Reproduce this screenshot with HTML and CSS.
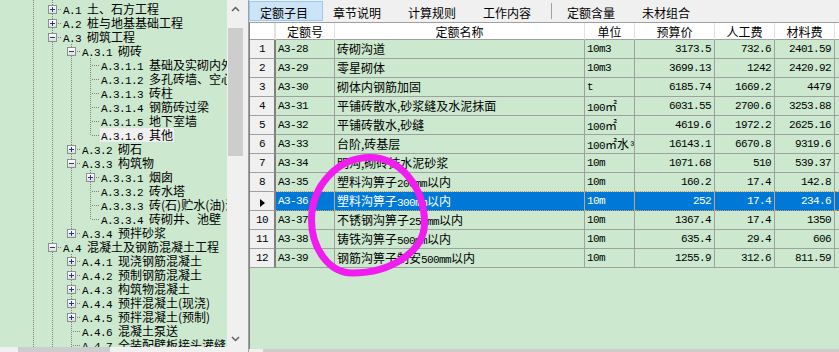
FILE: index.html
```html
<!DOCTYPE html>
<html lang="zh-CN">
<head>
  <meta charset="UTF-8" />
  <title>定额子目</title>
  <link rel="stylesheet" href="styles.css">
</head>
<body>
  <div class="window">
    <div class="left">
      <div class="tree">
        <div class="node top"><span class="c v"></span><span class="c v"></span></div>
        <div class="node"><span class="c v"></span><span class="c t"><b class="box plus"></b></span><span class="label"><span class="en">A.1 </span>土、石方工程</span></div>
        <div class="node"><span class="c v"></span><span class="c t"><b class="box plus"></b></span><span class="label"><span class="en">A.2 </span>桩与地基基础工程</span></div>
        <div class="node"><span class="c v"></span><span class="c t"><b class="box"></b></span><span class="label"><span class="en">A.3 </span>砌筑工程</span></div>
        <div class="node"><span class="c v"></span><span class="c v"></span><span class="c t"><b class="box"></b></span><span class="label"><span class="en">A.3.1 </span>砌砖</span></div>
        <div class="node"><span class="c v"></span><span class="c v"></span><span class="c v"></span><span class="c t"></span><span class="label"><span class="en">A.3.1.1 </span>基础及实砌内外墙</span></div>
        <div class="node"><span class="c v"></span><span class="c v"></span><span class="c v"></span><span class="c t"></span><span class="label"><span class="en">A.3.1.2 </span>多孔砖墙、空心砖墙</span></div>
        <div class="node"><span class="c v"></span><span class="c v"></span><span class="c v"></span><span class="c t"></span><span class="label"><span class="en">A.3.1.3 </span>砖柱</span></div>
        <div class="node"><span class="c v"></span><span class="c v"></span><span class="c v"></span><span class="c t"></span><span class="label"><span class="en">A.3.1.4 </span>钢筋砖过梁</span></div>
        <div class="node"><span class="c v"></span><span class="c v"></span><span class="c v"></span><span class="c t"></span><span class="label"><span class="en">A.3.1.5 </span>地下室墙</span></div>
        <div class="node"><span class="c v"></span><span class="c v"></span><span class="c v"></span><span class="c l"></span><span class="label cur"><span class="en">A.3.1.6 </span>其他</span></div>
        <div class="node"><span class="c v"></span><span class="c v"></span><span class="c t"><b class="box plus"></b></span><span class="label"><span class="en">A.3.2 </span>砌石</span></div>
        <div class="node"><span class="c v"></span><span class="c v"></span><span class="c t"><b class="box"></b></span><span class="label"><span class="en">A.3.3 </span>构筑物</span></div>
        <div class="node"><span class="c v"></span><span class="c v"></span><span class="c v"></span><span class="c t"><b class="box plus"></b></span><span class="label"><span class="en">A.3.3.1 </span>烟囱</span></div>
        <div class="node"><span class="c v"></span><span class="c v"></span><span class="c v"></span><span class="c t"></span><span class="label"><span class="en">A.3.3.2 </span>砖水塔</span></div>
        <div class="node"><span class="c v"></span><span class="c v"></span><span class="c v"></span><span class="c t"></span><span class="label"><span class="en">A.3.3.3 </span>砖(石)贮水(油)池</span></div>
        <div class="node"><span class="c v"></span><span class="c v"></span><span class="c v"></span><span class="c l"></span><span class="label"><span class="en">A.3.3.4 </span>砖砌井、池壁</span></div>
        <div class="node"><span class="c v"></span><span class="c v"></span><span class="c l"><b class="box plus"></b></span><span class="label"><span class="en">A.3.4 </span>预拌砂浆</span></div>
        <div class="node"><span class="c v"></span><span class="c t"><b class="box"></b></span><span class="label"><span class="en">A.4 </span>混凝土及钢筋混凝土工程</span></div>
        <div class="node"><span class="c v"></span><span class="c v"></span><span class="c t"><b class="box plus"></b></span><span class="label"><span class="en">A.4.1 </span>现浇钢筋混凝土</span></div>
        <div class="node"><span class="c v"></span><span class="c v"></span><span class="c t"><b class="box plus"></b></span><span class="label"><span class="en">A.4.2 </span>预制钢筋混凝土</span></div>
        <div class="node"><span class="c v"></span><span class="c v"></span><span class="c t"><b class="box plus"></b></span><span class="label"><span class="en">A.4.3 </span>构筑物混凝土</span></div>
        <div class="node"><span class="c v"></span><span class="c v"></span><span class="c t"><b class="box plus"></b></span><span class="label"><span class="en">A.4.4 </span>预拌混凝土(现浇)</span></div>
        <div class="node"><span class="c v"></span><span class="c v"></span><span class="c t"><b class="box plus"></b></span><span class="label"><span class="en">A.4.5 </span>预拌混凝土(预制)</span></div>
        <div class="node"><span class="c v"></span><span class="c v"></span><span class="c t"></span><span class="label"><span class="en">A.4.6 </span>混凝土泵送</span></div>
        <div class="node"><span class="c v"></span><span class="c v"></span><span class="c t"></span><span class="label"><span class="en">A.4.7 </span>全装配壁板接头灌缝</span></div>
      </div>
      <div class="vscroll">
        <div class="arrow"><svg width="9" height="6"><polyline points="1,5 4.5,1.5 8,5" fill="none" stroke="#606060" stroke-width="1.5"/></svg></div>
        <div class="thumb"></div>
        <div class="arrow down"><svg width="9" height="6"><polyline points="1,1 4.5,4.5 8,1" fill="none" stroke="#606060" stroke-width="1.5"/></svg></div>
      </div>
      <div class="hscroll"><div class="thumb"></div></div>
      <div class="corner"></div>
    </div>
    <div class="splitter"></div>
    <div class="right">
      <div class="tabs">
        <div class="tab on">定额子目</div>
        <div class="tab">章节说明</div>
        <div class="tab">计算规则</div>
        <div class="tab">工作内容</div>
        <div class="sep"></div>
        <div class="tab">定额含量</div>
        <div class="tab">未材组合</div>
      </div>
      <div class="grid">
        <div class="row head"><div class="no"></div><div>定额号</div><div>定额名称</div><div>单位</div><div>预算价</div><div>人工费</div><div>材料费</div><div></div></div>
        <div class="row"><div class="no en">1</div><div class="en">A3-28</div><div>砖砌沟道</div><div class="en">10m3</div><div class="num en">3173.5</div><div class="num en">732.6</div><div class="num en">2401.59</div><div></div></div>
        <div class="row"><div class="no en">2</div><div class="en">A3-29</div><div>零星砌体</div><div class="en">10m3</div><div class="num en">3699.13</div><div class="num en">1242</div><div class="num en">2420.92</div><div></div></div>
        <div class="row"><div class="no en">3</div><div class="en">A3-30</div><div>砌体内钢筋加固</div><div class="en">t</div><div class="num en">6185.74</div><div class="num en">1669.2</div><div class="num en">4479</div><div></div></div>
        <div class="row"><div class="no en">4</div><div class="en">A3-31</div><div>平铺砖散水,砂浆缝及水泥抹面</div><div><span class="en">100</span>㎡</div><div class="num en">6031.55</div><div class="num en">2700.6</div><div class="num en">3253.88</div><div></div></div>
        <div class="row"><div class="no en">5</div><div class="en">A3-32</div><div>平铺砖散水,砂缝</div><div><span class="en">100</span>㎡</div><div class="num en">4619.6</div><div class="num en">1972.2</div><div class="num en">2625.16</div><div></div></div>
        <div class="row"><div class="no en">6</div><div class="en">A3-33</div><div>台阶,砖基层</div><div><span class="en">100</span>㎡水<span class="en">³</span></div><div class="num en">16143.1</div><div class="num en">6670.8</div><div class="num en">9319.6</div><div></div></div>
        <div class="row"><div class="no en">7</div><div class="en">A3-34</div><div>明沟,砌砖抹水泥砂浆</div><div class="en">10m</div><div class="num en">1071.68</div><div class="num en">510</div><div class="num en">539.37</div><div></div></div>
        <div class="row pre"><div class="no en">8</div><div class="en">A3-35</div><div>塑料沟箅子<span class="en">200mm</span>以内</div><div class="en">10m</div><div class="num en">160.2</div><div class="num en">17.4</div><div class="num en">142.8</div><div></div></div>
        <div class="row sel"><div class="no"><span class="tri"></span></div><div class="en">A3-36</div><div>塑料沟箅子<span class="en">300mm</span>以内</div><div class="en">10m</div><div class="num en">252</div><div class="num en">17.4</div><div class="num en">234.6</div><div></div></div>
        <div class="row"><div class="no en">10</div><div class="en">A3-37</div><div>不锈钢沟箅子<span class="en">250mm</span>以内</div><div class="en">10m</div><div class="num en">1367.4</div><div class="num en">17.4</div><div class="num en">1350</div><div></div></div>
        <div class="row"><div class="no en">11</div><div class="en">A3-38</div><div>铸铁沟箅子<span class="en">500mm</span>以内</div><div class="en">10m</div><div class="num en">635.4</div><div class="num en">29.4</div><div class="num en">606</div><div></div></div>
        <div class="row"><div class="no en">12</div><div class="en">A3-39</div><div>钢筋沟箅子制安<span class="en">500mm</span>以内</div><div class="en">10m</div><div class="num en">1255.9</div><div class="num en">312.6</div><div class="num en">811.59</div><div></div></div>
      </div>
      <div class="hbar"><div class="thumb"></div></div>
    </div>
  </div>

  <!-- 红圈标注 -->
  <svg class="mark" width="839" height="352" viewBox="0 0 839 352">
    <path d="M370 157.5 C400 157.5 424.5 187 424.5 223 C424.5 250.5 392 273 352 273 C329.7 273 311.5 249 311.5 220 C311.5 185.6 337.8 157.5 370 157.5 Z" fill="none" stroke="#f01cf0" stroke-width="7"/>
  </svg>
</body>
</html>
```

FILE: styles.css
```css
* {
  box-sizing: border-box;
}
body {
  margin: 0;
  width: 839px;
  height: 352px;
  overflow: hidden;
  font: 12px "Noto Sans CJK SC", sans-serif;
  color: #000;
  background: #f0f0f0;
}
.en {
  font-family: "Liberation Mono", monospace;
  font-size: 11px;
  letter-spacing: -0.6px;
}
.window {
  display: flex;
  height: 352px;
}

/* 左侧章节树 */
.left {
  flex: none;
  width: 244px;
  display: grid;
  grid-template-columns: 227px 17px;
  grid-template-rows: 347px 17px;
}
.tree {
  background: #cce8cf;
  overflow: hidden;
  line-height: 14px;
}
.node {
  display: flex;
  height: 14px;
  padding-left: 24px;
  white-space: nowrap;
}
.node.top {
  height: 2px;
  overflow: hidden;
}
.c {
  flex: none;
  position: relative;
  width: 19px;
  height: 14px;
}
.v::before,
.t::before,
.l::before {
  content: "";
  position: absolute;
  left: 9px;
  top: 0;
  width: 1px;
  height: 14px;
  background: repeating-linear-gradient(#808080 0 1px, transparent 1px 2px);
}
.l::before {
  height: 8px;
}
.t::after,
.l::after {
  content: "";
  position: absolute;
  left: 10px;
  right: 0;
  top: 7px;
  height: 1px;
  background: repeating-linear-gradient(to right, transparent 0 1px, #808080 1px 2px);
}
.box {
  position: absolute;
  left: 5px;
  top: 3px;
  width: 9px;
  height: 9px;
  border: 1px solid #8e8f8f;
  background: linear-gradient(#fff, #dedede);
  z-index: 1;
}
.box::before {
  content: "";
  position: absolute;
  left: 1px;
  top: 3px;
  width: 5px;
  height: 1px;
  background: #1f3a93;
}
.plus::after {
  content: "";
  position: absolute;
  left: 3px;
  top: 1px;
  width: 1px;
  height: 5px;
  background: #1f3a93;
}
.label {
  padding: 0 1px;
}
.label.cur {
  background: #f0f0f0;
}

.vscroll {
  grid-row: 1;
  grid-column: 2;
  display: flex;
  flex-direction: column;
  background: #f0f0f0;
}
.arrow {
  flex: none;
  height: 17px;
  display: flex;
  align-items: center;
  justify-content: center;
}
.arrow svg {
  display: block;
}
.arrow.down {
  margin-top: auto;
}
.vscroll .thumb {
  flex: none;
  height: 128px;
  margin: 11px 1px 0;
  background: #cdcdcd;
}
.hscroll {
  grid-row: 2;
  grid-column: 1;
  padding-left: 18px;
  background: #f0f0f0;
}
.hscroll .thumb {
  width: 92px;
  height: 15px;
  background: #cdcdcd;
}
.corner {
  grid-row: 2;
  grid-column: 2;
  background: #f0f0f0;
}
.splitter {
  flex: none;
  width: 5px;
  background: #f0f0f0;
  border-right: 1px solid #a0a0a0;
}

/* 右侧子目表 */
.right {
  flex: none;
  width: 590px;
  display: flex;
  flex-direction: column;
}
.tabs {
  flex: none;
  height: 22px;
  padding-top: 1px;
  display: flex;
  align-items: flex-start;
  background: #f0f0f0;
}
.tab {
  flex: none;
  width: 75px;
  height: 20px;
  padding: 3px 0 0 9px;
  border: 1px solid transparent;
  line-height: 16px;
  white-space: nowrap;
}
.tab.on {
  width: 74px;
  padding-left: 10px;
  background: #cce4f7;
  border-color: #99c9ef;
}
.sep {
  flex: none;
  width: 1px;
  height: 16px;
  margin: 2px 5px 0 3px;
  background: #a0a0a0;
}
.grid {
  flex: none;
  height: 327px;
  border-top: 1px solid #a0a0a0;
  border-left: 1px solid #808080;
  background: #cce8cf;
  overflow: hidden;
}
.row {
  display: grid;
  grid-template-columns: 26px 59px 250px 50px 80px 60px 60px 60px;
  height: 19px;
}
.row > div {
  padding: 0 2px;
  border-right: 1px solid #a0a0a0;
  border-bottom: 1px solid #a0a0a0;
  line-height: 18px;
  white-space: nowrap;
  overflow: hidden;
}
.row > .no {
  padding: 0;
  text-align: center;
  background: #f0f0f0;
  border-right: 2px solid #808080;
}
.row > .num {
  text-align: right;
  padding-right: 3px;
}
.head {
  height: 17px;
  background: #fff;
}
.head > div {
  text-align: center;
  line-height: 17px;
  border-right-color: #e3e3e3;
}
.head > .no {
  background: #fff;
  border-right: 2px solid #e3e3e3;
}
.pre > div:not(.no) {
  border-bottom: 1px dotted #d09a5e;
}
.sel > div {
  background: #0078d7;
  color: #fff;
  border-right-color: #c8a47a;
  border-bottom: 1px dotted #d09a5e;
}
.sel > .no {
  background: #f0f0f0;
  border-right: 2px solid #808080;
  border-bottom: 1px solid #a0a0a0;
}
.tri {
  display: inline-block;
  width: 0;
  height: 0;
  border-left: 5px solid #000;
  border-top: 4px solid transparent;
  border-bottom: 4px solid transparent;
  vertical-align: middle;
}
.hbar {
  flex: none;
  height: 17px;
  padding-left: 14px;
  background: #f0f0f0;
}
.hbar .thumb {
  height: 15px;
  background: #cdcdcd;
}

.mark {
  position: absolute;
  left: 0;
  top: 0;
  pointer-events: none;
}
```
